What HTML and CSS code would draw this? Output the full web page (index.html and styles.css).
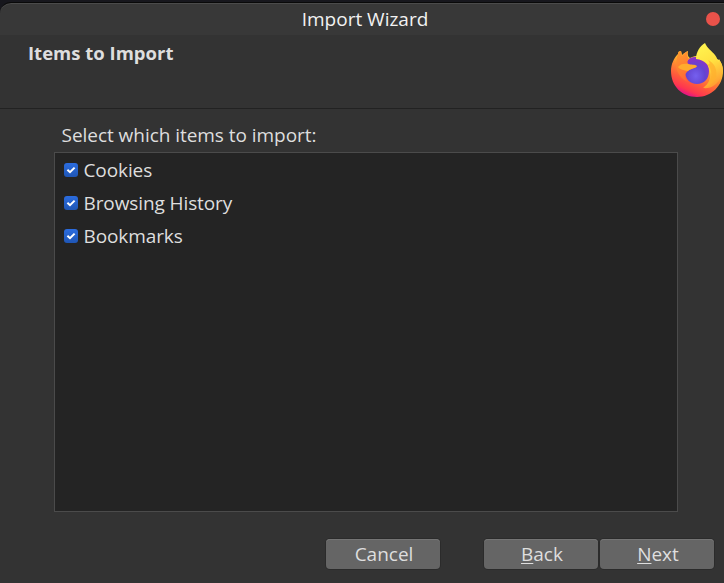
FILE: index.html
```html
<!DOCTYPE html>
<html lang="en">
<head>
<meta charset="utf-8">
<title>Import Wizard</title>
<link rel="stylesheet" href="styles.css">
</head>
<body>
<main class="window">
  <header class="titlebar">
    <h1 class="title">Import Wizard</h1>
    <span class="close"></span>
  </header>
  <section class="banner">
    <h2 class="heading">Items to Import</h2>
    <svg class="logo" viewBox="0 0 54 56">
      <defs>
        <linearGradient id="body" x1=".82" y1=".1" x2=".36" y2="1">
          <stop offset="0" stop-color="#fff44f"/><stop offset=".28" stop-color="#ffc52f"/><stop offset=".48" stop-color="#ff8a32"/><stop offset=".7" stop-color="#ff5a3c"/><stop offset=".88" stop-color="#ff3550"/><stop offset="1" stop-color="#e0118a"/>
        </linearGradient>
        <linearGradient id="flame" x1=".3" y1="0" x2=".6" y2="1">
          <stop offset="0" stop-color="#fff44f"/><stop offset=".45" stop-color="#ffe141"/><stop offset="1" stop-color="#ff9a30"/>
        </linearGradient>
        <radialGradient id="globe" cx=".45" cy=".7" r=".7">
          <stop offset="0" stop-color="#7560ef"/><stop offset=".55" stop-color="#6344d0"/><stop offset="1" stop-color="#9230c4"/>
        </radialGradient>
        <linearGradient id="fox" x1=".2" y1="0" x2=".6" y2="1">
          <stop offset="0" stop-color="#ff982c"/><stop offset="1" stop-color="#ff6337"/>
        </linearGradient>
      </defs>
      <path fill="url(#body)" d="M49 18C52 21 53 25 53 29C53 44 41 55 27 55C12 55 1 44 1 29C1 22 4 16 8 12C8 10 9 9 11 9L12 13C14 11 16 10 18 9C17 12 18 15 20 16C25 13 38 12 49 18Z"/>
      <path fill="url(#globe)" d="M15 29C15 20 18 15 25 15C33 14 39 20 39 29C39 37 34 42 27 42C20 42 15 37 15 29Z"/>
      <path fill="url(#flame)" d="M26 17C26 10 30 4 35 1C37 6 42 9 45 13C47 16 48 18 48 21L49 17C53 23 54 29 51 35C47 43 41 47 33 46C39 42 41 36 40 30C39 23 35 18 26 17Z"/>
      <path fill="#ffb02e" opacity=".75" d="M36 21C44 28 43 39 34 45C43 44 48 36 46 28C45 23 42 20 38 18C41 22 39 24 36 21Z"/>
      <path fill="url(#fox)" d="M8 12C8 10 9 9 11 9L12 14C14 11 16 10 18 9C17 12 17 15 19 17C16 20 18 22 20 23L27 24C25 27 21 26 18 29C14 32 14 36 18 40C11 37 7 31 6 24C6 18 7 14 8 12Z"/>
      <path fill="#ffab2d" d="M8 25C10 22 14 21 18 22C21 23 25 22 27 24C25 27 21 26 18 29C14 28 10 28 8 25Z"/>
    </svg>
  </section>
  <section class="content">
    <p class="prompt">Select which items to import:</p>
    <ul class="list">
      <li class="item"><svg class="check" viewBox="0 0 14 14"><path d="M3.4 6.8L6 9.2L10.6 4.6"/></svg><span>Cookies</span></li>
      <li class="item"><svg class="check" viewBox="0 0 14 14"><path d="M3.4 6.8L6 9.2L10.6 4.6"/></svg><span>Browsing History</span></li>
      <li class="item"><svg class="check" viewBox="0 0 14 14"><path d="M3.4 6.8L6 9.2L10.6 4.6"/></svg><span>Bookmarks</span></li>
    </ul>
  </section>
  <footer class="actions">
    <button class="button cancel">Cancel</button>
    <button class="button"><span><span class="key">B</span>ack</span></button>
    <button class="button"><span><span class="key">N</span>ext</span></button>
  </footer>
</main>
</body>
</html>
```
FILE: styles.css
```css
* { box-sizing: border-box; }
body {
  margin: 0;
  background: #17171d;
  color: #dedede;
  font: 19px/26px "Open Sans", "Noto Sans", sans-serif;
}
.window {
  display: flex;
  flex-direction: column;
  height: 583px;
  padding-top: 2px;
}
.titlebar {
  display: grid;
  grid-template-columns: 1fr auto 1fr;
  align-items: center;
  height: 33px;
  padding: 0 4px 0 10px;
  background: #383838;
  border-top: 1px solid #090909;
  border-radius: 11px 0 0;
  box-shadow: inset 0 1px #4b4b4b;
}
.title {
  grid-column: 2;
  margin: 0;
  color: #f2f2f2;
  font-size: 19px;
  font-weight: 400;
}
.close {
  justify-self: end;
  width: 14px;
  height: 14px;
  border-radius: 50%;
  background: #e9524a;
}
.banner {
  display: flex;
  justify-content: space-between;
  height: 74px;
  padding: 5px 0 0 28px;
  background: #333;
  border-bottom: 1px solid #222;
}
.heading {
  margin: 0;
  font-size: 18.5px;
  font-weight: 700;
}
.logo {
  width: 54px;
  height: 56px;
  margin-top: 2px;
}
.content {
  flex: none;
  height: 403px;
  padding: 13px 46px 0 54px;
  background: #333;
}
.prompt {
  margin: 0 0 4px;
  padding-left: 7.5px;
  letter-spacing: -0.04px;
}
.list {
  height: 360px;
  margin: 0;
  padding: 0 9px;
  list-style: none;
  background: #242424;
  border: 1px solid #4b4b4b;
}
.item {
  display: flex;
  align-items: center;
  gap: 5.5px;
  height: 33px;
  letter-spacing: -0.1px;
}
.check {
  width: 14px;
  height: 14px;
  border-radius: 3px;
  background: linear-gradient(#2b6cdf, #1f56b5);
}
.check path {
  fill: none;
  stroke: #fff;
  stroke-width: 2;
}
.actions {
  display: flex;
  flex: 1;
  gap: 2px;
  padding: 27px 10px 0 326px;
  background: #333;
}
.button {
  width: 114px;
  height: 30px;
  padding: 0 0 0 2px;
  color: #dedede;
  font: inherit;
  background: #656565;
  border: 0;
  border-radius: 4px;
  box-shadow: inset 0 1px #757575, 0 0 0 1px #2b2b2b;
}
.cancel { margin-right: 42px; }
.key {
  text-decoration: underline;
  text-decoration-thickness: 1px;
  text-underline-offset: 2px;
}
```
